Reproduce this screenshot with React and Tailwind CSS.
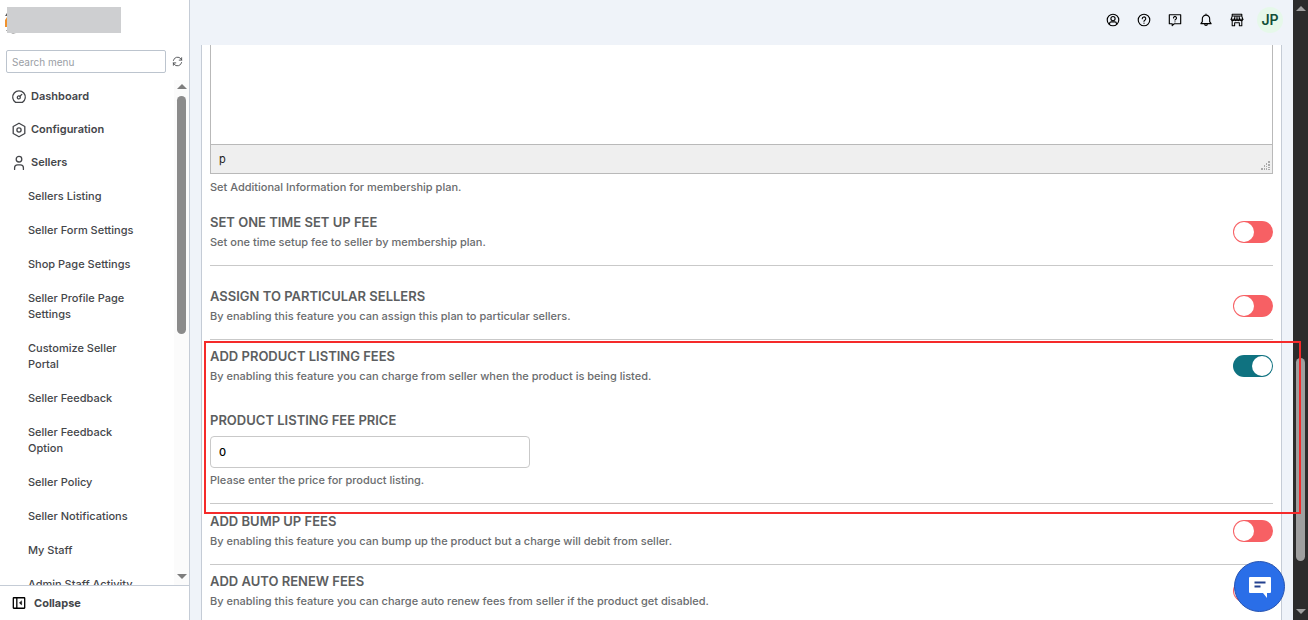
import React, { useState } from 'react';

const mainMenu = [
  { label: 'Dashboard', icon: DashboardIcon },
  { label: 'Configuration', icon: ConfigIcon },
  { label: 'Sellers', icon: SellerIcon },
];

const sellerMenu = [
  'Sellers Listing',
  'Seller Form Settings',
  'Shop Page Settings',
  'Seller Profile Page Settings',
  'Customize Seller Portal',
  'Seller Feedback',
  'Seller Feedback Option',
  'Seller Policy',
  'Seller Notifications',
  'My Staff',
  'Admin Staff Activity',
];

function Icon({ className, children, strokeWidth = 1.3 }) {
  return (
    <svg
      viewBox="0 0 16 16"
      className={className}
      fill="none"
      stroke="currentColor"
      strokeWidth={strokeWidth}
      strokeLinecap="round"
      strokeLinejoin="round"
      aria-hidden="true"
    >
      {children}
    </svg>
  );
}

function DashboardIcon() {
  return (
    <Icon className="size-4 shrink-0">
      <path d="M4.6 13.4a6.3 6.3 0 1 1 6.8 0z" />
      <circle cx="7.8" cy="8.4" r="1.5" />
      <path d="M9 7.200l1.800-1.800" />
    </Icon>
  );
}

function ConfigIcon() {
  return (
    <Icon className="size-4 shrink-0">
      <path d="M8 1.200l5.800 3.300v7L8 14.800l-5.800-3.300v-7z" />
      <circle cx="8" cy="8" r="2.1" />
    </Icon>
  );
}

function SellerIcon() {
  return (
    <Icon className="size-4 shrink-0">
      <circle cx="8" cy="4.200" r="2.8" />
      <path d="M3.600 14.400v-1.600a3 3 0 0 1 3-3h2.800a3 3 0 0 1 3 3v1.600" />
    </Icon>
  );
}

function Arrow({ up, className }) {
  return (
    <svg viewBox="0 0 10 5" className={`w-[10px] h-[5px] ${className}`} fill="currentColor" aria-hidden="true">
      <path d={up ? 'M5 0l5 5H0z' : 'M0 0h10L5 5z'} />
    </svg>
  );
}

function Toggle({ id, checked, onChange }) {
  return (
    <input
      id={id}
      type="checkbox"
      role="switch"
      checked={checked}
      onChange={onChange}
      className="appearance-none shrink-0 flex items-center w-10 h-[22px] px-px rounded-full bg-[#f76064] cursor-pointer before:block before:size-5 before:rounded-full before:bg-white checked:bg-[#0f7280] checked:before:ml-[18px]"
    />
  );
}

function SettingRow({ id, title, text, checked, onChange }) {
  return (
    <div className="flex items-center justify-between">
      <div>
        <label htmlFor={id} className="block text-[13px] leading-5 font-semibold uppercase">{title}</label>
        <p className="text-[11px] leading-5 font-medium text-[#6a6c6e]">{text}</p>
      </div>
      <Toggle id={id} checked={checked} onChange={onChange} />
    </div>
  );
}

const Sidebar = () => (
  <aside className="w-[190px] shrink-0 h-full flex flex-col bg-white border-r border-[#c5ccd6] text-[#44464a]">
    <div className="flex h-[50px] shrink-0 items-start pl-[5px] pt-[7px]">
      <svg viewBox="0 0 12 28" className="w-3 h-7 -mr-2.5" aria-hidden="true">
        <path d="M0 9l2-3v3z" fill="#555" />
        <path d="M0 13l2-3v10H0z" fill="#f0922f" />
        <path d="M1 23h1v1H1zM6 26h5l-3 1z" fill="#aaa" />
      </svg>
      <div className="relative w-[114px] h-[26px] bg-[#cecfd1]" />
    </div>
    <div className="flex items-center gap-1.5 pl-1.5 pb-[7px]">
      <input
        type="text"
        aria-label="Search menu"
        placeholder="Search menu"
        className="w-40 h-[23px] px-[5px] text-[10px] border border-[#bcc4ce] rounded-xs placeholder:text-[#9a9ea5] outline-none"
      />
      <button aria-label="Refresh menu" className="text-[#4a4c50]">
        <Icon className="size-[11px]" strokeWidth={1.3}>
          <path d="M2 6.500A6.200 6.200 0 0 1 13 4.200L14 6M14 2.500V6h-3.500M14 9.500A6.200 6.200 0 0 1 3 11.800L2 10M2 13.500V10h3.500" />
        </Icon>
      </button>
    </div>

    <div className="flex flex-1 min-h-0">
      <nav className="flex-1 overflow-hidden">
        {mainMenu.map(({ label, icon: MenuIcon }) => (
          <a key={label} href="#" className="flex items-center gap-1 h-[33px] pl-[11px] text-[11px] font-semibold">
            <MenuIcon />
            {label}
          </a>
        ))}
        {sellerMenu.map((label) => (
          <a key={label} href="#" className="block w-[150px] pl-7 py-[9px] text-[11px] leading-4 font-medium">
            {label}
          </a>
        ))}
      </nav>
      <div className="w-[15px] flex flex-col items-center gap-[7px] pt-1 pb-1.5 bg-[#fbfbfb] text-[#7d7d7d]">
        <Arrow up />
        <div className="w-[9px] h-[48%] rounded-full bg-[#8b8b8b]" />
        <Arrow className="mt-auto" />
      </div>
    </div>

    <button className="flex items-center gap-2 h-[35px] shrink-0 pl-3 border-t border-[#c5ccd6] text-[11px] font-bold">
      <Icon className="size-[14px] text-black" strokeWidth={1.5}>
        <rect x="1.500" y="2" width="13" height="12" rx="0.5" />
        <path d="M5.500 2v12" />
        <path d="M11 5.800v4.400L8.600 8z" fill="currentColor" strokeWidth="0.5" />
      </Icon>
      Collapse
    </button>
  </aside>
);

const Header = () => (
  <header className="flex h-[45px] shrink-0 items-start justify-end gap-[17px] pt-[7px] pr-2.5 text-black">
    <button aria-label="Account" className="h-[26px]">
      <Icon className="size-[14px]">
        <circle cx="8" cy="8" r="6.600" />
        <circle cx="8" cy="6.400" r="2.400" />
        <path d="M4 12.800v-.6a2 2 0 0 1 2-2h4a2 2 0 0 1 2 2v.6" />
      </Icon>
    </button>
    <button aria-label="Help" className="h-[26px]">
      <Icon className="size-[14px]">
        <circle cx="8" cy="8" r="6.600" />
        <path d="M6 6.500a2 2 0 1 1 3 1.700c-.7.400-1 .7-1 1.300M8 11.500v.2" />
      </Icon>
    </button>
    <button aria-label="Support chat" className="h-[26px]">
      <Icon className="size-[14px]">
        <path d="M1.500 2h13v10.300H7.200L4.800 14.400v-2.100H1.500z" />
        <path d="M6.300 5.700a1.700 1.700 0 1 1 2.600 1.400c-.7.400-.9.600-.9 1M8 10v.1" />
      </Icon>
    </button>
    <button aria-label="Notifications" className="h-[26px]">
      <Icon className="size-[14px]">
        <path d="M8 1.200v1M2.200 12.200h11.600l-1.600-2.400V7A4.200 4.200 0 0 0 8 2.400 4.200 4.200 0 0 0 3.800 7v2.800zM6.400 12.400a1.600 1.900 0 0 0 3.200 0" />
      </Icon>
    </button>
    <div className="flex items-center gap-[13px]">
      <button aria-label="Storefront" className="h-[26px]">
        <Icon className="size-[14px]" strokeWidth={1.2}>
          <path d="M2.500 1.500h11v2h-11zM2.500 3.500L1.300 7.200h13.400l-1.200-3.700M5.800 3.500L5 7.200M10.200 3.500l.8 3.700M8 3.500v3.700" />
          <path d="M1.300 7.200c.3 2 3.300 2 3.700 0 .4 2 2.600 2 3 0 .4 2 2.600 2 3 0 .4 2 3.400 2 3.700 0" />
          <path d="M2.500 9v5.500h2.800v-3.300h5.400v3.300h2.800V9" />
        </Icon>
      </button>
      <button className="size-[26px] rounded-full bg-[#e6f8ea] text-[#124f38] text-sm font-semibold">JP</button>
    </div>
  </header>
);

const App = () => {
  const [features, setFeatures] = useState({
    setup: false,
    assign: false,
    listing: true,
    bump: false,
    renew: false,
  });
  const [price, setPrice] = useState('0');

  const toggle = (name) => () => {
    setFeatures((prev) => ({ ...prev, [name]: !prev[name] }));
  };

  return (
    <div className="flex h-screen overflow-hidden bg-[#eff3f9] font-['Inter',sans-serif]">
      <Sidebar />

      <div className="flex-1 min-w-0 flex flex-col">
        <Header />

        <main className="mx-[11px] px-2 bg-white border-x border-[#c5ccd6] text-[#5c5e60]">
          {/* Additional information editor */}
          <textarea
            aria-label="Additional information"
            className="block w-full h-[99px] resize-none border-x border-[#b9b9b9] outline-none"
          />
          <div className="flex items-center justify-between h-[30px] pl-2 pr-0.5 border border-[#b9b9b9] bg-[#efefef] text-[11px] text-[#222]">
            p
            <svg viewBox="0 0 9 9" className="size-[9px] self-end mb-[3px]" fill="#aaa" aria-hidden="true">
              <path d="M7 0h2v2H7zM5 2h1v2H5zM7 3h2v2H7zM3 4h1v2H3zM5 5h1v1H5zM7 6h2v1H7zM0 7h2v2H0zM3 7h1v2H3zM5 7h1v2H5zM7 8h2v1H7z" />
            </svg>
          </div>
          <p className="pt-[3px] text-[11px] leading-5 font-medium text-[#6a6c6e]">
            Set Additional Information for membership plan.
          </p>

          <section className="pt-[15px] pb-[13px] border-b border-[#c9c9c9]">
            <SettingRow
              id="setup"
              title="Set one time set up fee"
              text="Set one time setup fee to seller by membership plan."
              checked={features.setup}
              onChange={toggle('setup')}
            />
          </section>

          <section className="pt-5 pb-[13px] border-b border-[#c9c9c9]">
            <SettingRow
              id="assign"
              title="Assign to particular sellers"
              text="By enabling this feature you can assign this plan to particular sellers."
              checked={features.assign}
              onChange={toggle('assign')}
            />
          </section>

          <section className="relative pt-1.5 pb-[13px] border-b border-[#c9c9c9]">
            <SettingRow
              id="listing"
              title="Add product listing fees"
              text="By enabling this feature you can charge from seller when the product is being listed."
              checked={features.listing}
              onChange={toggle('listing')}
            />
            <label htmlFor="price" className="block pt-6 text-[13px] leading-5 font-semibold uppercase">
              Product listing fee price
            </label>
            <input
              id="price"
              type="text"
              value={price}
              onChange={(e) => setPrice(e.target.value)}
              className="block mt-1.5 w-80 h-8 px-2 text-[11px] font-medium text-black border border-[#c9c9c9] rounded outline-none"
            />
            <p className="pt-0.5 text-[11px] leading-5 font-medium text-[#6a6c6e]">
              Please enter the price for product listing.
            </p>
            {/* Highlighted area */}
            <div className="absolute z-10 top-px -bottom-[11px] -left-1.5 -right-7 border-2 border-[#f52a2a] pointer-events-none" />
          </section>

          <section className="pt-[7px] pb-[13px] border-b border-[#c9c9c9]">
            <SettingRow
              id="bump"
              title="Add bump up fees"
              text="By enabling this feature you can bump up the product but a charge will debit from seller."
              checked={features.bump}
              onChange={toggle('bump')}
            />
          </section>

          <section className="pt-1.5 pb-[13px] border-b border-[#c9c9c9]">
            <SettingRow
              id="renew"
              title="Add auto renew fees"
              text="By enabling this feature you can charge auto renew fees from seller if the product get disabled."
              checked={features.renew}
              onChange={toggle('renew')}
            />
          </section>
        </main>
      </div>

      {/* Page scrollbar */}
      <div className="w-[15px] shrink-0 flex flex-col items-center pt-1.5 pb-1.5 bg-[#2c2c2c] text-[#9f9f9f]">
        <Arrow up />
        <div className="flex-1 w-[9px] flex flex-col">
          <div className="h-[58%]" />
          <div className="h-[34%] rounded-full bg-[#9f9f9f]" />
        </div>
        <Arrow />
      </div>

      <button
        aria-label="Open chat"
        className="fixed z-20 right-[23px] bottom-2 size-[51px] flex items-center justify-center rounded-full bg-[#2a6ee8] border border-[#2552b0]"
      >
        <svg viewBox="0 0 24 24" className="size-6" aria-hidden="true">
          <path d="M2 2h20a1 1 0 0 1 1 1v14a1 1 0 0 1-1 1h-3v5l-4-5H2a1 1 0 0 1-1-1V3a1 1 0 0 1 1-1z" fill="#fff" />
          <path d="M6.500 7.500h11M6.500 11.500h6" stroke="#23408f" strokeWidth="2" />
        </svg>
      </button>
    </div>
  );
};

export default App;
